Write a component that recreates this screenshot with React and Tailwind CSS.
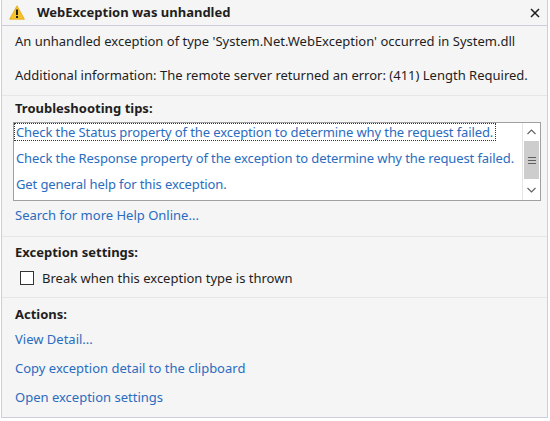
import React from "react";

const link = "text-[#2a6cc0]";

const Warn = () => (
  <svg width="16" height="15" viewBox="0 0 16 15">
    <path d="M8 0.8 L15.4 14.2 L0.6 14.2 Z" fill="#f6c22a" stroke="#e0a812" strokeWidth="0.8" strokeLinejoin="round" />
    <rect x="7" y="4.5" width="2" height="5.5" fill="#1e1e1e" />
    <rect x="7" y="11" width="2" height="2" fill="#1e1e1e" />
  </svg>
);

export default function App() {
  return (
    <div className="w-[550px] h-[421px] bg-white text-[13px] text-[#1e1e1e]" style={{ fontFamily: '"Noto Sans", "Open Sans", sans-serif' }}>
      <div className="ml-px w-[547px] h-[418px] border border-t-0 border-[#cccedb] bg-[#f5f5f5] flex flex-col">
        {/* Header */}
        <div className="h-[26px] border-b border-[#cccedb] flex items-center pl-[7px] pr-[7px]">
          <Warn />
          <span className="ml-[12px] font-bold text-[13px]">WebException was unhandled</span>
          <span className="ml-auto">
            <svg width="10" height="10" viewBox="0 0 10 10">
              <path d="M1 1 L9 9 M9 1 L1 9" stroke="#1e1e1e" strokeWidth="1.5" />
            </svg>
          </span>
        </div>

        {/* Message */}
        <div className="pl-[13px] pt-[5px] pb-[10px] border-b border-[#e6e6e6] leading-[20px]">
          <div>An unhandled exception of type 'System.Net.WebException' occurred in System.dll</div>
          <div className="mt-[14px]">Additional information: The remote server returned an error: (411) Length Required.</div>
        </div>

        {/* Troubleshooting */}
        <div className="pl-[11px] pr-[6px] pt-[2px] pb-[11px] border-b border-[#e6e6e6] leading-[20px]">
          <div className="pl-[2px] font-bold">Troubleshooting tips:</div>
          <div className="mt-[4px] h-[79px] bg-white border border-[#a0a0a0] flex">
            <div className="flex-1 min-w-0 overflow-hidden flex flex-col gap-[8px] leading-[16px] whitespace-nowrap tracking-[-0.1px]">
              <div className={`${link} self-start h-[18px] border border-dotted border-[#333] pl-[1px] pr-[2px]`}>
                Check the Status property of the exception to determine why the request failed.
              </div>
              <div className={`${link} h-[18px] border border-transparent pl-[1px]`}>
                Check the Response property of the exception to determine why the request failed.
              </div>
              <div className={`${link} h-[18px] border border-transparent pl-[1px]`}>Get general help for this exception.</div>
            </div>
            <div className="w-[18px] shrink-0 border-l border-[#e6e6e6] flex flex-col bg-white">
              <div className="h-[18px] flex items-center justify-center">
                <svg width="9" height="6" viewBox="0 0 9 6"><path d="M0.5 5 L4.5 1 L8.5 5" fill="none" stroke="#606060" strokeWidth="1.1" /></svg>
              </div>
              <div className="mx-px h-[38px] bg-[#cdcdcd] flex flex-col items-center justify-center gap-[2px]">
                <div className="w-[8px] h-px bg-[#606060]" />
                <div className="w-[8px] h-px bg-[#606060]" />
                <div className="w-[8px] h-px bg-[#606060]" />
              </div>
              <div className="flex-1 flex items-center justify-center">
                <svg width="9" height="6" viewBox="0 0 9 6"><path d="M0.5 1 L4.5 5 L8.5 1" fill="none" stroke="#606060" strokeWidth="1.1" /></svg>
              </div>
            </div>
          </div>
          <div className={`${link} pl-[2px] mt-[4px]`}>Search for more Help Online...</div>
        </div>

        {/* Exception settings */}
        <div className="pl-[13px] pt-[5px] pb-[9px] border-b border-[#e6e6e6] leading-[20px]">
          <div className="font-bold">Exception settings:</div>
          <div className="mt-[6px] flex items-center">
            <div className="ml-[5px] w-[14px] h-[14px] bg-white border border-[#333]" />
            <span className="ml-[8px]">Break when this exception type is thrown</span>
          </div>
        </div>

        {/* Actions */}
        <div className="pl-[13px] pt-[6px] leading-[20px]">
          <div className="font-bold">Actions:</div>
          <div className={`${link} mt-[5px]`}>View Detail...</div>
          <div className={`${link} mt-[9px]`}>Copy exception detail to the clipboard</div>
          <div className={`${link} mt-[9px]`}>Open exception settings</div>
        </div>
      </div>
    </div>
  );
}
